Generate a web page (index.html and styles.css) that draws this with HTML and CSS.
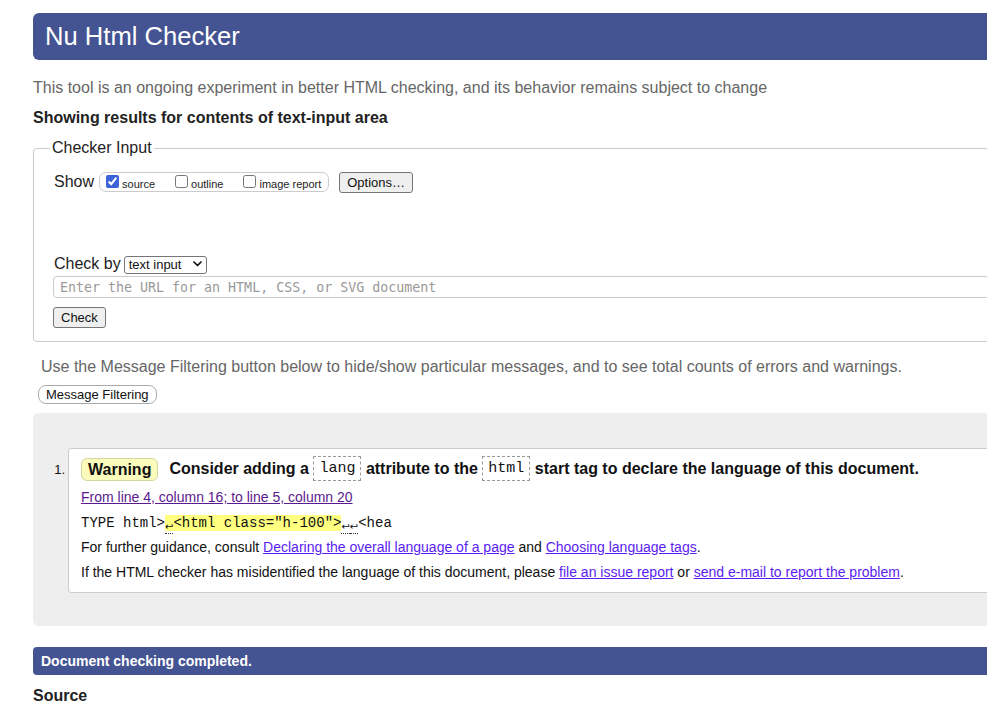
FILE: index.html
```html
<!DOCTYPE html>
<html lang="en">
<head>
<meta charset="utf-8">
<title>Nu Html Checker</title>
<link rel="stylesheet" href="styles.css">
</head>
<body>
<div class="page">
  <h1 class="title">Nu Html Checker</h1>
  <p class="intro">This tool is an ongoing experiment in better HTML checking, and its behavior remains subject to change</p>
  <p class="showing">Showing results for contents of text-input area</p>

  <fieldset class="checker">
    <legend class="legend">Checker Input</legend>
    <div class="show-row">
      <span class="show-label">Show</span>
      <span class="show-group">
        <label class="opt"><input type="checkbox" class="cb" checked><span>source</span></label>
        <label class="opt"><input type="checkbox" class="cb"><span>outline</span></label>
        <label class="opt"><input type="checkbox" class="cb"><span>image report</span></label>
      </span>
      <button class="btn options-btn" type="button">Options…</button>
    </div>
    <div class="checkby-row">
      <span class="checkby-label">Check by</span>
      <span class="select-wrap">
        <select class="select"><option>text input</option></select>
        <svg class="chev" width="9" height="6" viewBox="0 0 9 6"><path d="M1 1l3.5 3.5L8 1" fill="none" stroke="#111" stroke-width="1.7" stroke-linecap="round" stroke-linejoin="round"/></svg>
      </span>
    </div>
    <input class="url" type="text" placeholder="Enter the URL for an HTML, CSS, or SVG document">
    <div class="check-row"><button class="btn" type="button">Check</button></div>
  </fieldset>

  <p class="filter-note">Use the Message Filtering button below to hide/show particular messages, and to see total counts of errors and warnings.</p>
  <button class="filter-btn" type="button">Message Filtering</button>

  <div class="results">
    <ol class="messages">
      <li class="msg-item">
        <span class="num">1.</span>
        <div class="msg">
          <p class="msg-head">
            <strong class="badge">Warning</strong>
            <span class="msg-text">Consider adding a <code class="code">lang</code> attribute to the <code class="code">html</code> start tag to declare the language of this document.</span>
          </p>
          <p class="loc"><a class="visited" href="#">From line 4, column 16; to line 5, column 20</a></p>
          <p class="extract"><code>TYPE html&gt;<mark class="hl"><span class="lf">↩</span>&lt;html class="h-100"&gt;</mark><span class="lf">↩</span><span class="lf">↩</span>&lt;hea</code></p>
          <p class="info">For further guidance, consult <a class="link" href="#">Declaring the overall language of a page</a> and <a class="link" href="#">Choosing language tags</a>.</p>
          <p class="info">If the HTML checker has misidentified the language of this document, please <a class="link" href="#">file an issue report</a> or <a class="link" href="#">send e-mail to report the problem</a>.</p>
        </div>
      </li>
    </ol>
  </div>

  <p class="done">Document checking completed.</p>
  <h2 class="source">Source</h2>
</div>
</body>
</html>
```

FILE: styles.css
```css
html, body {
  margin: 0;
  padding: 0;
  background: #fff;
  overflow: hidden;
}
body {
  font-family: "Liberation Sans", Arial, sans-serif;
  color: #111;
  font-size: 16px;
}
.page {
  margin-left: 33px;
  width: 1140px;
}
.title {
  margin: 13px 0 0;
  height: 47px;
  line-height: 47px;
  background: #445392;
  color: #fff;
  font-size: 25.6px;
  font-weight: normal;
  padding-left: 12px;
  border-radius: 6px;
}
.intro {
  margin: 19px 0 0;
  line-height: 18px;
  color: #666;
}
.showing {
  margin: 12px 0 0;
  line-height: 18px;
  font-weight: bold;
  color: #222;
}
.checker {
  margin: 12px 0 0;
  padding: 0 0 13px 20px;
  border: 1px solid #ccc;
  border-radius: 4px;
  min-width: 0;
}
.legend {
  margin-left: -4px;
  padding: 0 2px;
  line-height: 18px;
  color: #222;
}
.show-row {
  display: flex;
  align-items: center;
  margin-top: 14px;
  height: 22px;
}
.show-label {
  margin-right: 5px;
  color: #222;
}
.show-group {
  display: inline-flex;
  align-items: center;
  gap: 20px;
  height: 18px;
  padding: 0 7px 0 6px;
  border: 1px solid #ccc;
  border-radius: 7px;
}
.opt {
  display: inline-flex;
  align-items: center;
  gap: 3px;
  font-size: 11px;
  color: #222;
}
.opt span {
  position: relative;
  top: 2px;
}
.cb {
  margin: 0;
  width: 13px;
  height: 13px;
  accent-color: #3c63d8;
  position: relative;
  top: -1px;
}
.btn {
  font-family: "Liberation Sans", Arial, sans-serif;
  font-size: 13px;
  line-height: 17px;
  padding: 1px 7px;
  border: 1px solid #767676;
  border-radius: 3px;
  background: #efefef;
  color: #111;
}
.options-btn {
  margin-left: 10px;
}
.checkby-row {
  display: flex;
  align-items: center;
  margin-top: 61px;
  height: 20px;
}
.checkby-label {
  margin-right: 3px;
  color: #222;
}
.select-wrap {
  position: relative;
  display: inline-block;
}
.select {
  appearance: none;
  -webkit-appearance: none;
  width: 83px;
  height: 18px;
  padding: 0 0 0 4px;
  font-family: "Liberation Sans", Arial, sans-serif;
  font-size: 13px;
  line-height: 16px;
  border: 1px solid #767676;
  border-radius: 3px;
  background: #fff;
  color: #111;
}
.chev {
  position: absolute;
  right: 5px;
  top: 6px;
  pointer-events: none;
}
.url {
  display: block;
  box-sizing: border-box;
  width: 1100px;
  height: 22px;
  margin: 2px 0 0 -1px;
  padding: 0 6px;
  border: 1px solid #ccc;
  border-radius: 4px;
  font-family: "DejaVu Sans Mono", monospace;
  font-size: 13.3px;
}
.url::placeholder {
  color: #999;
}
.check-row {
  margin: 9px 0 0 -1px;
  height: 21px;
}
.filter-note {
  margin: 16px 0 0;
  padding-left: 8px;
  line-height: 18px;
  color: #666;
}
.filter-btn {
  display: block;
  margin: 9px 0 0 5px;
  font-family: "Liberation Sans", Arial, sans-serif;
  font-size: 13px;
  line-height: 15px;
  padding: 1px 7px;
  border: 1px solid #aaa;
  border-radius: 8px;
  background: #fff;
  color: #111;
}
.results {
  margin-top: 9px;
  background: #eee;
  border-radius: 6px;
  padding: 35px 0 33px;
}
.messages {
  list-style: none;
  margin: 0;
  padding: 0;
}
.msg-item {
  display: flex;
  align-items: flex-start;
}
.num {
  width: 35px;
  box-sizing: border-box;
  padding: 14px 3px 0 0;
  text-align: right;
  font-size: 13px;
  line-height: 15px;
}
.msg {
  flex: 1;
  background: #fff;
  border: 1px solid #ccc;
  border-radius: 3px;
  padding: 9px 0 12px 12px;
}
.msg p {
  margin: 0;
}
.msg-head {
  display: flex;
  align-items: center;
  height: 23px;
}
.badge {
  display: inline-block;
  line-height: 19px;
  padding: 1px 6px;
  border: 1px solid #d6d6a0;
  border-radius: 6px;
  background: #fbfbbb;
  margin-right: 11px;
  white-space: nowrap;
}
.msg-text {
  font-weight: bold;
  white-space: nowrap;
}
.code {
  display: inline-block;
  vertical-align: middle;
  font-family: "Liberation Mono", "Courier New", monospace;
  font-weight: normal;
  font-size: 15px;
  line-height: 23px;
  padding: 0 5px;
  border: 1px dashed #999;
  margin-top: -2px;
}
.loc {
  margin-top: 8px !important;
  font-size: 14px;
  line-height: 16px;
}
.visited {
  color: #5b1a8e;
}
.extract {
  margin-top: 9px !important;
  height: 16px;
  line-height: 16px;
}
.extract code {
  font-family: "Liberation Mono", "Courier New", monospace;
  font-size: 14px;
}
.hl {
  background: #ffff80;
  color: inherit;
}
.lf {
  display: inline-block;
  width: 8.4px;
  font-size: 10px;
  line-height: 12px;
  text-align: center;
  border-bottom: 1px dotted #333;
  vertical-align: -3px;
  font-family: "DejaVu Sans", sans-serif;
}
.info {
  margin-top: 9px !important;
  font-size: 14px;
  line-height: 16px;
}
.link {
  color: #5a1cf0;
}
.done {
  margin: 21px 0 0;
  height: 28px;
  line-height: 28px;
  padding-left: 8px;
  background: #445392;
  color: #fff;
  font-weight: bold;
  font-size: 14px;
  border-radius: 4px;
}
.source {
  margin: 12px 0 0;
  font-size: 16px;
  line-height: 18px;
  color: #222;
}
```
